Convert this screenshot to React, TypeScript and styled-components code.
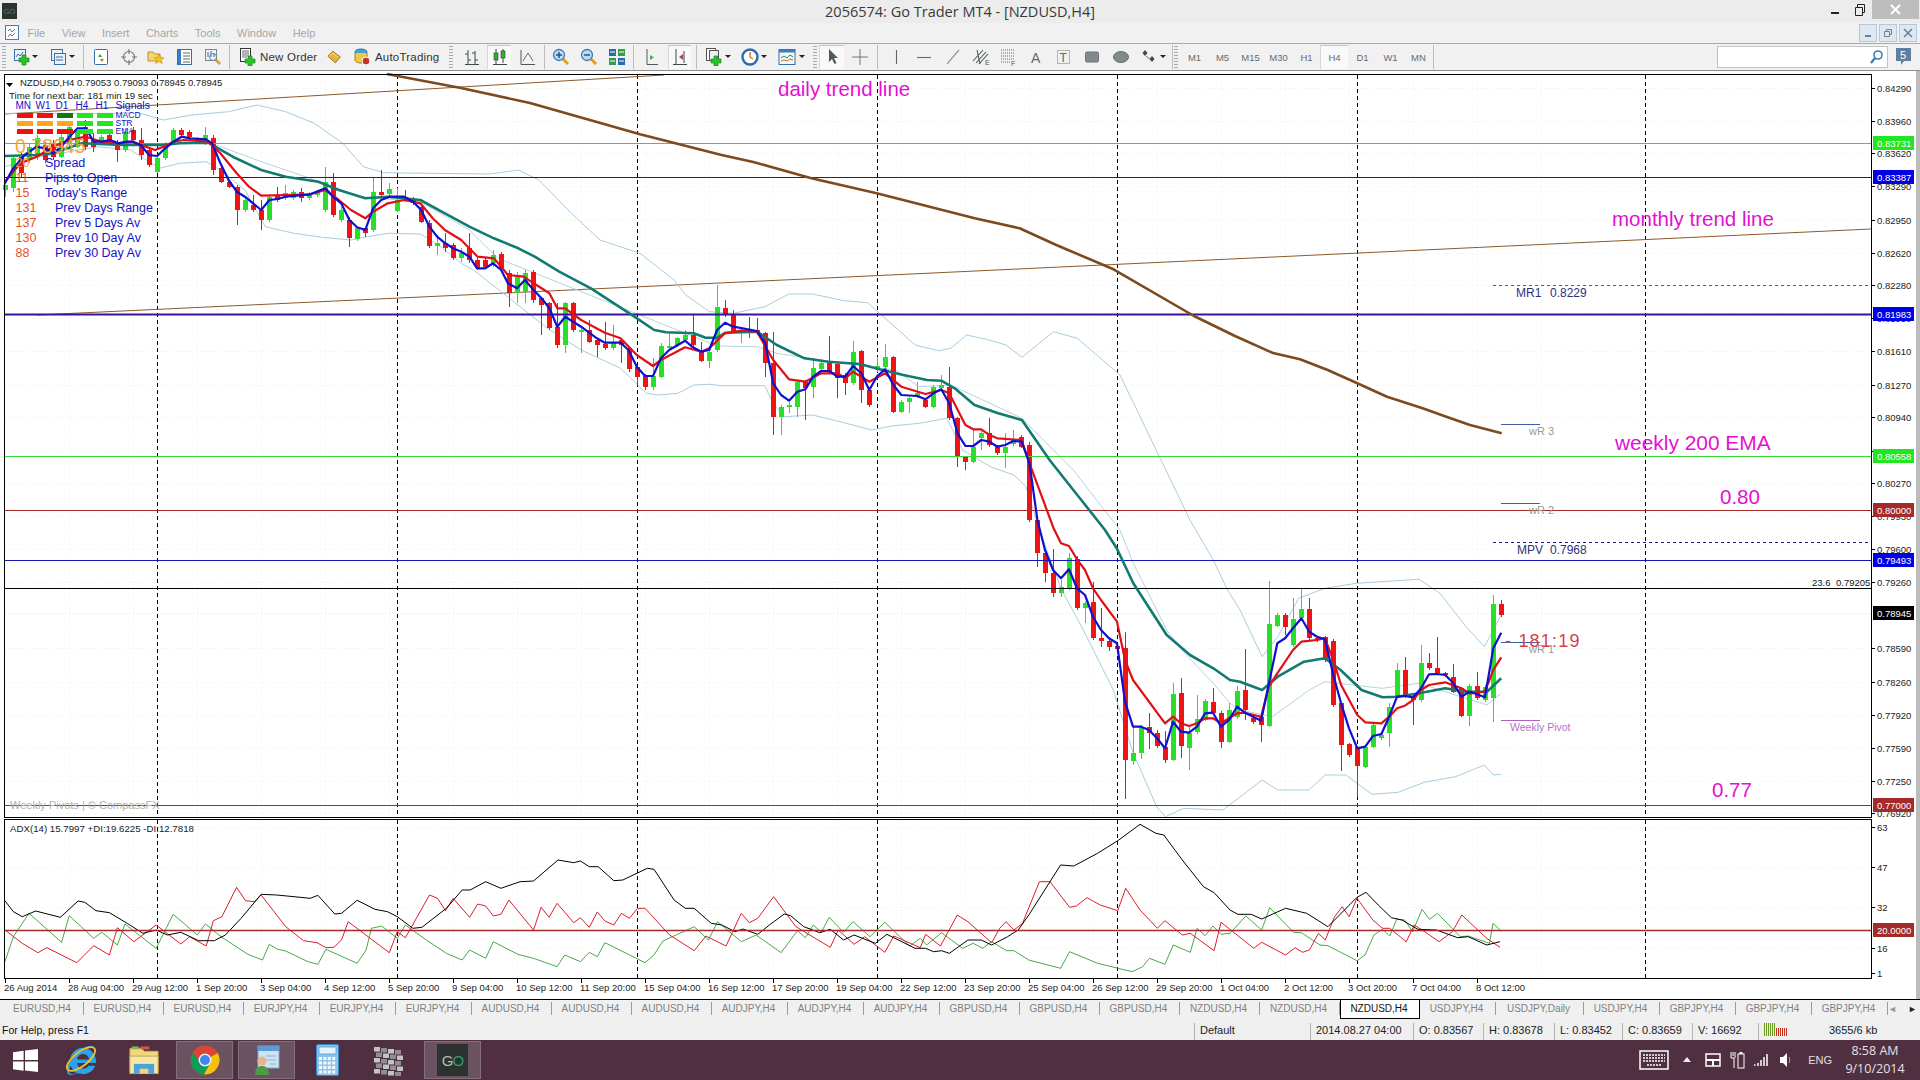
import React from "react";
import styled, { createGlobalStyle } from "styled-components";
import { FaInternetExplorer } from "react-icons/fa";

type Pt = [number, number];
type Bar = [string, number, number, number?, number?];

const GlobalStyle = createGlobalStyle`
  html, body {
    margin: 0;
    padding: 0;
    width: 1920px;
    height: 1080px;
    overflow: hidden;
    background: #f0f0f0;
    font-family: "Liberation Sans", Arial, sans-serif;
  }
`;

/* ---------- chart data, read off the chart in pixels ---------- */

const scaled =
  (x0: number, xs: number, y0: number) =>
  (flat: number[]): Pt[] => {
    const out: Pt[] = [];
    for (let i = 0; i < flat.length; i += 2) {
      out.push([x0 + flat[i] / xs, y0 + flat[i + 1] / 3]);
    }
    return out;
  };
const za = scaled(0, 2.45, 0);
const zb = scaled(500, 2.529, 270);
const zc = scaled(1000, 3, 520);
const zd = scaled(1100, 1.912, 560);
const zs = scaled(640, 2.45, 0);
const zr = scaled(1300, 2.529, 270);
const adxA = scaled(0, 2.24, 780);
const adxB = scaled(690, 1.889, 810);

const join = (...parts: Pt[][]): string => {
  let last = -1;
  const out: string[] = [];
  parts.flat().forEach(([x, y]) => {
    if (x > last) {
      out.push(`${x.toFixed(1)},${y.toFixed(1)}`);
      last = x;
    }
  });
  return out.join(" ");
};

const blueLine = join(
  za([12,550,30,510,60,465,90,440,110,445,130,460,150,440,170,410,190,385,210,385,230,425,250,425,270,420,290,430,310,425,325,425,345,435,365,465,385,468,405,445,425,425,445,410,465,415,505,418,520,430,540,490,560,540,580,575,600,590,640,630,660,600,680,597,700,590,760,583,797,565,816,590,836,610,856,660,875,682,895,690,914,625,934,600,954,590,990,590,1012,605,1032,630,1052,680,1071,710,1091,730,1110,745,1130,755,1150,770,1169,805,1189,805,1208,790,1228,810]),
  zb([20,40,43,55,63,30,85,60,105,85,125,115,145,170,165,140,205,170,245,205,265,218,305,218,325,240,346,290,367,318,387,318,407,265,428,240,468,212,488,232,509,245,529,240,549,180,569,158,590,170,650,183,671,220,691,340,711,375,731,392,752,365,772,358,792,320,812,303,833,303,853,320,873,320,893,288,914,310,934,360,954,318,974,298,995,345,1015,375,1055,378,1076,388,1096,370,1116,358,1136,400,1157,490,1177,528,1197,528,1217,510,1238,515,1258,530,1278,525,1298,513,1319,515,1339,580,1359,750]),
  zc([135,90,159,150,183,175,207,148,231,205,255,225,279,290,303,330,327,355,351,370,375,545,399,620,423,620,447,630,471,655,495,685,519,605,543,635,567,638,591,620,615,580,639,578,663,620,687,600]),
  zd([262,440,277,458,293,470,308,482,323,370,339,250,354,235,369,205,385,175,400,215,415,230,430,238,446,345,461,430,476,505,492,565,507,560,522,528,538,522,553,470,568,410,583,408,599,412,614,385,629,343,645,342,660,345,675,368,691,410,706,395,721,403,736,412,752,265,767,218])
);

const redLine = join(
  za([12,545,50,490,90,470,130,440,170,420,210,410,250,425,290,430,325,425,345,435,380,450,400,440,425,425,450,420,510,425,540,460,580,520,610,560,640,587,700,585,760,583,797,570,830,600,860,630,895,655,914,635,950,610,990,600,1030,610,1060,655,1090,690,1130,720,1170,770,1210,775,1228,800]),
  zb([20,15,60,20,85,40,125,70,145,115,165,115,205,150,265,188,305,205,346,255,387,288,407,270,468,232,509,245,529,235,569,190,610,182,650,185,691,270,731,328,772,335,812,310,853,310,873,325,893,305,934,335,974,310,1015,350,1076,372,1116,360,1136,370,1177,465,1197,478,1217,478,1238,495,1258,505,1319,510,1339,580,1400,775]),
  zc([159,20,183,70,207,78,231,118,255,150,279,205,303,240,351,305,375,420,399,480,495,610,519,590,543,610,567,618,591,610,615,595,639,595,663,610,711,580]),
  zd([277,458,308,470,323,380,339,340,369,270,385,245,415,240,430,235,446,300,461,375,492,465,507,487,538,490,553,470,568,445,583,437,599,420,614,390,629,375,660,367,691,385,706,400,736,395,752,330,767,292])
);

const tealLine = join(
  za([12,468,90,465,130,460,200,430,300,435,400,435,440,430,510,428,570,470,640,510,700,530,780,545,830,570,895,595,950,590,1030,600,1090,640,1150,680,1210,715,1270,745,1310,770,1370,815]),
  zb([230,55,340,140,390,180,420,187,490,190,520,203,550,203,570,188,650,185,700,225,770,265,830,275,910,282,960,298,1020,315,1080,330,1116,332,1150,355,1200,405,1260,430,1320,450,1390,570,1430,630,1470,690,1530,780]),
  zc([350,85,400,190,500,345,570,405,640,445,690,480,720,485]),
  zd([262,365,310,390,340,350,390,305,430,295,460,330,500,390,540,412,570,410,610,400,660,385,700,395,740,395,767,355])
);

const ema200 = join(
  zs([-620,222]),
  [[461,88],[530,103]],
  zs([0,403,200,465,280,487,420,535,580,580,700,617,820,655,930,685,1020,735,1160,808]),
  [[1194,316],[1235,336],[1273,353]],
  zr([0,268,70,300,145,340,220,380,310,415,370,440,430,465,510,490])
);

const upperBand = join(
  za([12,340,280,340,340,338,400,360,470,345,560,335,630,315,700,335,770,370,840,430,890,500,940,518,1050,520,1200,522,1270,510,1320,540,1400,640,1470,720,1568,760]),
  zb([440,30,470,75,530,125,590,130,670,110,730,72,790,72,870,92,930,98,960,130,1050,225,1110,242,1140,235,1180,195,1230,208,1280,225,1320,262,1400,185,1460,205,1568,315]),
  zc([570,0,640,120,680,205,720,270]),
  zd([260,150,310,290,340,230,380,115,430,85,490,70,610,58,650,100,700,200,735,260,752,210,767,165])
);

const midBand = join(
  za([530,435,640,485,760,535,880,590,1030,605,1150,690,1220,775]),
  zb([550,228,650,230,700,250,800,268,900,285,1000,300,1060,350,1140,345,1320,445,1450,600,1568,780]),
  zc([320,0,350,40,400,130,500,330,550,395,640,490,690,550,720,570]),
  zd([330,470,400,390,430,365,500,378,540,385,610,370,640,385,740,435,767,400])
);

const lowerBand = join(
  za([12,500,100,470,240,440,320,450,390,505,440,490,505,485,540,510,600,570,650,680,720,700,790,712,860,720,900,710,950,700,1030,702,1080,740,1130,790,1160,810]),
  zb([40,100,120,175,205,240,305,295,370,370,400,375,450,370,490,345,530,343,560,347,670,347,690,400,720,440,790,435,870,458,940,480,990,468,1060,460,1130,445,1170,540,1240,590,1300,615,1330,650,1365,780]),
  zc([185,210,250,330,340,510,400,700,470,860]),
  zd([125,770,160,745,235,750,310,660,340,690,400,690,430,645,470,645,520,703,570,697,620,667,680,650,735,615,752,645,767,643])
);

const adxBlack = join(
  adxA([11,362,30,395,50,410,80,393,135,412,175,363,190,367,215,392,245,398,285,430,320,460,350,450,375,465,405,457,445,482,480,482,505,465,540,415,585,343,620,345,695,355,712,346,750,402,765,400,800,361,840,388,868,395,890,410,925,445,945,442,1000,385,1035,330,1053,330,1088,305,1122,325,1165,305,1195,303,1250,240,1285,248,1300,243,1320,260,1340,260,1375,302,1395,300,1450,265,1465,268,1510,360,1535,385,1555,385]),
  adxB([40,340,60,345,85,365,100,357,128,373,150,345,178,312,190,317,215,350,245,368,265,358,290,390,310,375,350,400,372,373,425,415,445,415,460,425,475,422,490,430,525,390,550,390,570,405,600,380,620,360,640,315,700,165,725,168,770,130,810,90,850,43,880,70,895,75,930,150,970,230,990,248,1020,300,1035,313,1060,313,1080,327,1125,295,1165,310,1205,350,1260,262,1277,247,1300,285,1325,323,1345,330,1375,358,1410,360,1450,383,1470,380,1505,405,1530,395])
);

const adxRed = join(
  adxA([11,450,50,490,85,518,105,503,172,548,210,497,245,525,263,443,300,485,350,435,405,492,425,470,462,498,478,422,497,410,530,322,550,362,570,365,585,345,640,440,680,482,710,488,730,503,748,502,765,480,780,425,872,518,890,455,908,473,962,345,980,355,998,392,1015,355,1052,412,1070,372,1088,378,1105,408,1122,403,1140,360,1195,450,1212,382,1230,412,1248,370,1285,428,1300,413,1320,442,1338,396,1355,423,1375,435,1392,400,1410,415,1428,385,1445,385,1500,465,1555,512]),
  adxB([30,378,68,408,97,310,112,338,128,325,158,260,200,350,265,412,280,360,310,403,330,380,368,427,385,378,435,413,445,373,473,408,505,315,525,335,570,398,585,355,597,335,612,360,628,340,660,215,680,215,717,292,730,288,750,263,775,285,808,302,823,235,850,300,883,355,897,332,930,375,945,370,990,422,1003,337,1065,415,1080,397,1125,435,1143,413,1157,427,1170,420,1187,370,1200,390,1217,322,1232,290,1245,320,1260,265,1290,330,1308,355,1322,355,1353,395,1368,345,1385,362,1415,395,1440,365,1458,315,1505,385,1530,412])
);

const adxGreen = join(
  adxA([11,545,30,470,65,400,138,487,155,407,210,475,228,457,263,495,280,432,350,505,388,403,442,465,460,432,495,470,555,523,588,540,603,493,622,508,640,513,690,545,712,553,730,508,800,550,820,510,832,445,855,438,890,475,908,435,955,480,1000,520,1035,540,1052,510,1088,535,1105,485,1160,523,1195,535,1248,560,1265,525,1300,545,1320,517,1338,530,1355,488,1445,548,1465,525,1485,483,1555,440]),
  adxB([35,390,52,335,97,395,125,375,172,428,203,362,218,383,233,345,248,367,263,322,290,367,308,335,340,380,368,337,415,408,435,385,447,405,475,368,515,415,535,400,553,415,570,395,598,422,612,422,640,450,700,475,717,425,770,460,835,485,855,470,868,445,897,463,913,405,945,427,958,355,973,377,988,348,1003,373,1020,370,1050,318,1080,360,1095,293,1140,367,1155,368,1190,405,1205,407,1260,452,1275,435,1292,375,1308,358,1322,378,1335,328,1350,330,1365,365,1383,298,1397,328,1412,310,1455,380,1470,378,1510,400,1517,340,1530,360])
);

// [colour, body top, body bottom, wick top, wick bottom]
const barsA: Bar[] = [
  ["g",555,570,540,590],["g",475,565,470,575],["r",470,520,460,530],["g",440,480,430,490],["g",415,470,405,480],["r",435,480,425,490],["r",430,470,420,480],["g",410,470,400,475],["g",380,430,370,440],["g",390,440,380,445],
  ["r",380,440,360,450],["r",420,440,400,455],["g",410,430,405,435],["r",405,430,395,435],["r",430,450,420,485],["g",395,450,385,455],["r",390,420,380,425],["r",420,465,385,480],["r",450,495,440,500],["g",475,515,465,520],
  ["g",430,475,425,480],["g",390,430,385,435],["r",390,405,385,415],["r",395,410,390,420],["g",415,425,410,430],["g",405,430,380,435],["r",415,510,405,525],["r",505,545,500,550],["r",545,560,540,565],["r",560,630,555,675],
  ["g",600,630,590,635],["r",615,630,585,635],["r",630,660,600,690],["g",590,660,585,665],["r",585,600,560,605],["g",580,595,555,600],["g",575,595,570,600],["r",575,595,565,605],["g",585,595,575,600],["g",575,585,570,590],
  ["g",545,630,500,635],["r",545,645,520,650],["g",630,660,620,665],["r",660,715,650,740],["g",685,718,680,722],["r",685,700,680,710],["g",575,690,535,695],["r",575,585,510,590],["g",568,582,548,590],["g",600,632,565,636],
  ["r",592,602,570,606],["r",598,608,590,615],["r",620,665,610,670],["r",670,738,660,745],["g",730,738,705,765],["r",730,745,700,755],["r",735,775,730,780],["g",760,775,745,785],["r",745,780,700,790],["r",780,805,775,810],
  ["r",780,800,770,806],["g",765,790,750,800],["r",762,805,755,810],
];
const barsB: Bar[] = [
  ["r",10,70,0,110],["g",15,70,5,100],["g",10,65,0,100],["r",5,90,0,100],["r",85,105,80,195],["r",100,175,95,180],["r",170,225,100,235],["g",100,225,95,250],["r",100,180,95,185],["g",180,185,175,248],
  ["r",180,215,150,220],["r",210,225,205,260],["r",222,235,155,240],["g",215,235,165,240],["r",210,225,205,280],["r",235,298,230,305],["r",290,320,285,345],["r",318,350,312,360],["g",318,352,265,360],["g",228,320,220,325],
  ["g",228,235,190,240],["g",205,225,200,232],["g",195,210,180,215],["r",195,225,135,240],["r",245,272,215,276],["g",245,272,240,295],["g",110,240,45,245],["r",115,135,90,140],["r",135,185,120,190],["g",180,190,175,220],
  ["r",178,184,140,205],["r",180,190,145,195],["r",190,278,185,320],["r",278,442,185,495],["g",410,442,405,495],["g",405,410,395,430],["g",335,410,330,440],["r",335,355,330,450],["g",295,352,265,385],["g",280,298,275,305],
  ["r",280,305,198,310],["r",282,325,278,385],["r",315,340,310,375],["g",245,340,212,345],["r",243,360,240,400],["r",360,405,355,410],["g",288,300,260,305],["g",262,290,222,295],["r",262,425,258,430],["g",395,425,390,430],
  ["g",385,395,380,430],["g",370,380,335,385],["r",390,410,385,415],["g",350,410,345,415],["g",345,355,315,360],["r",350,445,290,450],["r",445,558,440,590],["r",562,575,558,600],["g",532,575,475,580],["g",488,505,482,540],
  ["r",488,525,445,530],["r",530,550,525,555],["g",530,548,490,595],["g",510,522,480,528],["r",500,530,495,535],["r",525,750,515,755],
];
const barsC: Bar[] = [
  ["r",0,100,0,140],["r",100,160,95,185],["r",160,220,88,232],["g",200,220,180,230],["g",115,205,100,210],["r",118,265,108,270],["g",248,265,244,310],["r",245,355,185,360],["r",355,362,265,382],["r",362,380,358,392],
  ["r",378,386,374,390],["r",385,720,335,838],["g",698,722,620,735],["g",620,698,615,718],["r",620,640,578,688],["r",638,678,630,685],["r",680,720,632,728],["g",522,720,490,724],["r",520,678,475,715],["g",640,684,620,750],
  ["g",598,635,525,642],["g",542,600,538,604],["r",545,580,505,584],["r",578,665,574,685],["g",570,665,550,669],
];
const barsD: Bar[] = [
  ["g",392,470,378,476],["r",390,450,268,480],["r",475,487,470,492],["r",472,495,468,545],["g",192,497,62,500],["g",165,198,160,202],["r",165,200,160,225],["g",178,255,115,260],["g",148,175,85,180],["r",148,235,115,240],
  ["r",235,240,230,245],["r",232,300,228,305],["r",242,435,238,440],["r",430,555,425,632],["r",553,585,548,590],["r",562,618,558,710],["g",560,620,555,625],["g",495,560,490,565],["g",525,535,515,540],["g",440,520,430,560],
  ["g",330,410,310,415],["r",330,410,290,415],["r",410,420,405,495],["g",310,420,255,425],["r",310,325,280,330],["r",325,340,232,345],["r",340,346,335,350],["r",350,395,312,400],["r",385,468,380,472],["g",378,468,372,498],
  ["r",378,415,335,420],["g",380,420,375,425],["g",132,415,105,487],["r",132,165,120,170],
];

const candles = [
  ...barsA.map((b) => ({ b, y0: 0 })),
  ...barsB.map((b) => ({ b, y0: 270 })),
  ...barsC.map((b) => ({ b, y0: 520 })),
  ...barsD.map((b) => ({ b, y0: 560 })),
];

const verticals = [157, 397, 637, 877, 1117, 1357, 1645];

const priceLabels: [number, string][] = [
  [88,"0.84290"],[121,"0.83960"],[153,"0.83620"],[186,"0.83290"],[220,"0.82950"],[253,"0.82620"],[285,"0.82280"],[318,"0.81950"],
  [351,"0.81610"],[385,"0.81270"],[417,"0.80940"],[451,"0.80600"],[483,"0.80270"],[516,"0.79930"],[549,"0.79600"],[582,"0.79260"],
  [648,"0.78590"],[682,"0.78260"],[715,"0.77920"],[748,"0.77590"],[781,"0.77250"],[813,"0.76920"],
];

const levels: { y: number; color: string; tag: string; text: string; w?: number }[] = [
  { y: 143, color: "#2fdc2f", tag: "#22e622", text: "0.83731" },
  { y: 177, color: "#1616b0", tag: "#0000e6", text: "0.83387" },
  { y: 314, color: "#3a10a0", tag: "#0000e6", text: "0.81983", w: 2 },
  { y: 456, color: "#2fdc2f", tag: "#22e622", text: "0.80558" },
  { y: 510, color: "#a52a2a", tag: "#a52a2a", text: "0.80000" },
  { y: 560, color: "#1616b0", tag: "#0000e6", text: "0.79493" },
  { y: 805, color: "#a52a2a", tag: "#a52a2a", text: "0.77000" },
];

const signalRows = [
  ["#ee1111", "#ee1111", "#0b7a12", "#22e622", "#22e622"],
  ["#ffa51e", "#ffa51e", "#ffa51e", "#22e622", "#22e622"],
  ["#ee1111", "#ee1111", "#ee1111", "#22e622", "#22e622"],
];

const infoRows: [number, string, string, number][] = [
  [167, "20", "Spread", 45],
  [182, "11", "Pips to Open", 45],
  [197, "15", "Today's Range", 45],
  [212, "131", "Prev Days Range", 55],
  [227, "137", "Prev 5 Days Av", 55],
  [242, "130", "Prev 10 Day Av", 55],
  [257, "88", "Prev 30 Day Av", 55],
];

const timeLabels = [
  "26 Aug 2014","28 Aug 04:00","29 Aug 12:00","1 Sep 20:00","3 Sep 04:00","4 Sep 12:00","5 Sep 20:00","9 Sep 04:00","10 Sep 12:00","11 Sep 20:00","15 Sep 04:00","16 Sep 12:00",
  "17 Sep 20:00","19 Sep 04:00","22 Sep 12:00","23 Sep 20:00","25 Sep 04:00","26 Sep 12:00","29 Sep 20:00","1 Oct 04:00","2 Oct 12:00","3 Oct 20:00","7 Oct 04:00","8 Oct 12:00",
];

const tabs: [string, number][] = [
  ["EURUSD,H4",81],["EURUSD,H4",80],["EURUSD,H4",80],["EURJPY,H4",76],["EURJPY,H4",76],["EURJPY,H4",76],
  ["AUDUSD,H4",80],["AUDUSD,H4",80],["AUDUSD,H4",80],["AUDJPY,H4",76],["AUDJPY,H4",76],["AUDJPY,H4",76],
  ["GBPUSD,H4",80],["GBPUSD,H4",80],["GBPUSD,H4",80],["NZDUSD,H4",80],["NZDUSD,H4",80],["NZDUSD,H4",80],
  ["USDJPY,H4",76],["USDJPY,Daily",88],["USDJPY,H4",76],["GBPJPY,H4",76],["GBPJPY,H4",76],["GBPJPY,H4",76],
];

const timeframes = ["M1", "M5", "M15", "M30", "H1", "H4", "D1", "W1", "MN"];

const statusCells: [string, number][] = [
  ["2014.08.27 04:00", 103],
  ["O: 0.83567", 70],
  ["H: 0.83678", 71],
  ["L: 0.83452", 68],
  ["C: 0.83659", 70],
  ["V: 16692", 66],
];

/* ---------- window chrome ---------- */

const Page = styled.div`
  width: 1920px;
  height: 1080px;
  display: flex;
  flex-direction: column;
  background: #f0f0f0;
  overflow: hidden;
`;
const TitleBar = styled.div`
  height: 23px;
  background: #ececec;
  position: relative;
  display: flex;
  align-items: center;
  justify-content: center;
  font-family: "Open Sans", sans-serif;
  font-size: 14.5px;
  color: #3a3a3a;
`;
const AppBadge = styled.div`
  position: absolute;
  left: 2px;
  top: 3px;
  width: 15px;
  height: 16px;
  background: #2b322f;
  color: #5d7a6c;
  font-size: 8px;
  line-height: 16px;
  text-align: center;
`;
const WinButtons = styled.div`
  position: absolute;
  right: 1px;
  top: 0;
  display: flex;
  align-items: center;
  height: 19px;
`;
const WinButton = styled.div<{ $close?: boolean }>`
  width: ${(p) => (p.$close ? 47 : 25)}px;
  height: 19px;
  display: flex;
  align-items: center;
  justify-content: center;
  background: ${(p) => (p.$close ? "#bdbdbd" : "transparent")};
`;
const MenuBar = styled.div`
  height: 20px;
  background: #f1f1f1;
  display: flex;
  align-items: center;
  gap: 16.5px;
  padding-left: 5px;
  font-size: 11px;
  color: #a6a6a6;
  position: relative;
`;
const MenuIcon = styled.div`
  width: 15px;
  height: 16px;
  margin-right: -9px;
`;
const MdiButtons = styled.div`
  margin-left: auto;
  display: flex;
  gap: 2px;
  padding-right: 3px;
`;
const MdiButton = styled.div`
  width: 16px;
  height: 16px;
  background: #dde8f2;
  border: 1px solid #b4c8d8;
  display: flex;
  align-items: center;
  justify-content: center;
`;

const Toolbar = styled.div`
  height: 27px;
  background: #f1f1f1;
  border-top: 1px solid #a9a9a9;
  border-bottom: 1px solid #8f8f8f;
  display: flex;
  align-items: center;
`;
const Tool = styled.div<{ $w: number; $ml?: number; $active?: boolean }>`
  flex: none;
  width: ${(p) => p.$w}px;
  height: 24px;
  margin-left: ${(p) => p.$ml ?? 0}px;
  display: flex;
  align-items: center;
  justify-content: center;
  background: ${(p) => (p.$active ? "#f9f9f9" : "transparent")};
  border-top: 1px solid ${(p) => (p.$active ? "#c4c4c4" : "transparent")};
  border-left: 1px solid ${(p) => (p.$active ? "#d6d6d6" : "transparent")};
  box-sizing: border-box;
  font-size: 9.5px;
  color: #6a6a6a;
`;
const Caret = styled.div<{ $ml?: number }>`
  flex: none;
  width: 8px;
  margin-left: ${(p) => p.$ml ?? 0}px;
  display: flex;
  justify-content: center;
  &::after {
    content: "";
    border-left: 3px solid transparent;
    border-right: 3px solid transparent;
    border-top: 3px solid #222;
  }
`;
const Sep = styled.div<{ $ml?: number }>`
  flex: none;
  width: 1px;
  height: 24px;
  margin-left: ${(p) => p.$ml ?? 0}px;
  background: #bcbcbc;
`;
const Grip = styled.div<{ $w?: number; $ml?: number }>`
  flex: none;
  width: 4px;
  height: 22px;
  margin-left: ${(p) => p.$ml ?? 3}px;
  margin-right: ${(p) => (p.$w ? p.$w - 6 - (p.$ml ?? 3) + 2 : 2)}px;
  background: repeating-linear-gradient(to bottom, #a9a9a9 0 1px, transparent 1px 3px);
`;
const ToolLabel = styled.div<{ $w: number; $ml?: number }>`
  flex: none;
  width: ${(p) => p.$w}px;
  margin-left: ${(p) => p.$ml ?? 0}px;
  font-size: 11.5px;
  letter-spacing: 0.2px;
  color: #333;
  white-space: nowrap;
`;
const SearchBox = styled.div`
  margin-left: auto;
  width: 171px;
  height: 22px;
  box-sizing: border-box;
  background: #fff;
  border: 1px solid #c2c2c2;
  display: flex;
  align-items: center;
  justify-content: flex-end;
  padding-right: 3px;
`;
const ChatBadge = styled.div`
  margin: 0 8px 0 7px;
  width: 17px;
  height: 19px;
  display: flex;
`;

/* ---------- chart ---------- */

const ChartBody = styled.div`
  height: 928px;
  background: #fff;
  border-right: 4px solid #bcbcbc;
  width: 1916px;
  display: flex;
  flex-direction: column;
`;
const PanelSvg = styled.svg`
  display: block;
  flex: none;
  font-family: "Liberation Sans", Arial, sans-serif;
`;
const Txt = styled.text<{ $c?: string; $s?: number }>`
  fill: ${(p) => p.$c ?? "#222"};
  font-size: ${(p) => p.$s ?? 9.5}px;
`;
const TimeAxis = styled.div`
  height: 20px;
  display: flex;
  padding-left: 5px;
`;
const TimeCell = styled.div`
  flex: none;
  width: 64px;
  position: relative;
  font-size: 9.5px;
  line-height: 9px;
  padding-top: 4px;
  box-sizing: border-box;
  color: #222;
  white-space: nowrap;
  text-indent: -1px;
  &::before {
    content: "";
    position: absolute;
    left: 0;
    top: 0;
    width: 1px;
    height: 4px;
    background: #000;
  }
`;

/* ---------- tabs and status ---------- */

const TabBar = styled.div`
  height: 20px;
  box-sizing: border-box;
  background: #f0f0f0;
  border-top: 1px solid #000;
  display: flex;
  align-items: stretch;
  padding-left: 3px;
`;
const Tab = styled.div<{ $w: number; $active?: boolean }>`
  flex: none;
  width: ${(p) => p.$w}px;
  box-sizing: border-box;
  display: flex;
  align-items: center;
  justify-content: center;
  font-size: 10px;
  color: ${(p) => (p.$active ? "#111" : "#808080")};
  background: ${(p) => (p.$active ? "#fff" : "transparent")};
  border-right: ${(p) => (p.$active ? "1px solid #000" : "1px solid #9a9a9a")};
  border-left: ${(p) => (p.$active ? "1px solid #000" : "none")};
  border-bottom: ${(p) => (p.$active ? "1px solid #000" : "none")};
  margin: ${(p) => (p.$active ? "0" : "2px 0 4px")};
  padding: ${(p) => (p.$active ? "0 2px 2px 0" : "0 2px 0 0")};
`;
const TabArrows = styled.div`
  margin-left: auto;
  padding-right: 5px;
  display: flex;
  align-items: center;
  gap: 11px;
  font-size: 9px;
  color: #999;
  margin-bottom: 2px;
`;
const StatusBar = styled.div`
  height: 21px;
  background: #efefef;
  display: flex;
  align-items: center;
  font-size: 11px;
  color: #222;
`;
const StatusHelp = styled.div`
  width: 1194px;
  padding-left: 2px;
  box-sizing: border-box;
  font-size: 10.5px;
  color: #111;
  flex: none;
`;
const StatusCell = styled.div<{ $w: number }>`
  flex: none;
  width: ${(p) => p.$w}px;
  box-sizing: border-box;
  height: 17px;
  margin-top: 4px;
  line-height: 15px;
  padding-left: 5px;
  border-left: 1px solid #b5b5b5;
  white-space: nowrap;
`;
const Memory = styled.div`
  margin-left: 41px;
  white-space: nowrap;
`;

/* ---------- taskbar ---------- */

const Taskbar = styled.div`
  height: 40px;
  background: #4f2f40;
  display: flex;
  align-items: center;
  color: #e8e0e4;
`;
const TaskSlot = styled.div<{ $w: number; $ml?: number; $open?: boolean }>`
  flex: none;
  position: relative;
  width: ${(p) => p.$w}px;
  height: 38px;
  margin-left: ${(p) => p.$ml ?? 0}px;
  box-sizing: border-box;
  display: flex;
  align-items: center;
  justify-content: center;
  background: ${(p) => (p.$open ? "#6b5260" : "transparent")};
  border: 1px solid ${(p) => (p.$open ? "#84707b" : "transparent")};
`;
const IeRing = styled.svg`
  position: absolute;
  left: 0;
  top: 1px;
`;
const GoMark = styled.div`
  width: 31px;
  height: 32px;
  background: #2b322f;
  display: flex;
  align-items: center;
  justify-content: center;
  font-size: 15px;
  letter-spacing: -1px;
  color: #b8bdba;
  & > span {
    color: #2f9c72;
  }
`;
const Tray = styled.div`
  margin-left: auto;
  display: flex;
  align-items: center;
  height: 40px;
`;
const Lang = styled.div`
  font-size: 11px;
  margin-left: 16px;
`;
const Clock = styled.div`
  width: 60px;
  margin-left: 13px;
  margin-right: 15px;
  line-height: 18px;
  text-align: center;
  font-family: "Open Sans", sans-serif;
  font-size: 12.5px;
  white-space: nowrap;
`;

/* ---------- icons ---------- */

const Ico = ({ children, w = 18, h = 18 }: { children: React.ReactNode; w?: number; h?: number }) => (
  <svg width={w} height={h} viewBox={`0 0 ${w} ${h}`}>
    {children}
  </svg>
);
const Plus = ({ x, y }: { x: number; y: number }) => (
  <path d={`M${x + 3} ${y}h4v3h3v4h-3v3h-4v-3h-3v-4h3z`} fill="#27c427" stroke="#137a13" strokeWidth=".6" />
);
const Doc = ({ x = 2, y = 1, w = 12, h = 13 }: { x?: number; y?: number; w?: number; h?: number }) => (
  <rect x={x + 0.5} y={y + 0.5} width={w} height={h} fill="#e8f0f8" stroke="#3a6ea5" />
);
const Lens = ({ sign }: { sign: "+" | "-" }) => (
  <>
    <line x1="10" y1="10" x2="16" y2="16" stroke="#e59a2c" strokeWidth="3" />
    <circle cx="7" cy="7" r="5.5" fill="#bcd9f0" stroke="#3b78b5" strokeWidth="1.3" />
    <path d={sign === "+" ? "M4 7h6M7 4v6" : "M4 7h6"} stroke="#1c4f8a" strokeWidth="1.4" />
  </>
);

const Icons = {
  newChart: (
    <Ico>
      <Doc w={11} h={11} />
      <path d="M4 9l2-3 2 2 3-4" stroke="#3a6ea5" fill="none" />
      <Plus x={7} y={7} />
    </Ico>
  ),
  profiles: (
    <Ico>
      <Doc w={11} h={11} />
      <Doc x={5} y={5} w={11} h={11} />
      <path d="M7 9h7M7 12h7" stroke="#3a6ea5" />
    </Ico>
  ),
  market: (
    <Ico>
      <rect x="2.5" y="1.5" width="13" height="15" rx="1" fill="#fff" stroke="#3a6ea5" />
      <path d="M6 9l2-3 2 3z" fill="#22aa22" />
      <path d="M8 11h4l-2 3z" fill="#e07018" />
    </Ico>
  ),
  nav: (
    <Ico>
      <circle cx="9" cy="9" r="5.5" fill="none" stroke="#777" strokeWidth="1.2" />
      <path d="M9 1v5M9 12v5M1 9h5M12 9h5" stroke="#777" strokeWidth="1.2" />
    </Ico>
  ),
  folderStar: (
    <Ico>
      <path d="M1 4h5l2 2h5v7H1z" fill="#f5d66a" stroke="#b8912e" />
      <path d="M12 6l1.6 3.4 3.4.4-2.6 2.3.8 3.4-3.2-1.9-3.2 1.9.8-3.4L7 9.8l3.4-.4z" fill="#f7c21c" stroke="#b8912e" strokeWidth=".6" />
    </Ico>
  ),
  terminal: (
    <Ico>
      <rect x="1.5" y="1.5" width="14" height="15" fill="#fff" stroke="#3a6ea5" />
      <rect x="2" y="2" width="3" height="14" fill="#3a7fc4" />
      <path d="M7 5h7M7 8h7M7 11h7M7 14h7" stroke="#666" />
    </Ico>
  ),
  tester: (
    <Ico>
      <rect x="1.5" y="1.5" width="11" height="11" fill="#eef2f6" stroke="#6f86a0" />
      <path d="M4 4v5M7 3v6M10 5v4" stroke="#3a6ea5" />
      <circle cx="9" cy="9" r="3.5" fill="none" stroke="#6f86a0" />
      <line x1="12" y1="12" x2="16" y2="16" stroke="#e59a2c" strokeWidth="2.5" />
    </Ico>
  ),
  newOrder: (
    <Ico>
      <rect x="1.5" y="0.5" width="10" height="13" fill="#fff" stroke="#333" />
      <path d="M3 3h7M3 5h7M3 7h7M3 9h5" stroke="#6a6a6a" />
      <Plus x={6} y={8} />
    </Ico>
  ),
  tag: (
    <Ico>
      <path d="M1 8l6-6 9 7-6 7z" fill="#e7b53c" stroke="#8a6a1e" />
      <path d="M3 8l4-4 6 5" stroke="#f7e3a0" fill="none" />
    </Ico>
  ),
  auto: (
    <Ico>
      <ellipse cx="8" cy="4" rx="6" ry="3" fill="#3fa7d6" stroke="#2a6d93" />
      <path d="M2 5v7c0 2 3 3 6 3s6-1 6-3V5" fill="#f0c64a" stroke="#a1821f" />
      <circle cx="13" cy="13" r="4" fill="#c6322a" stroke="#fff" />
    </Ico>
  ),
  bars: (
    <Ico w={16} h={18}>
      <path d="M4 2v14M1 6h3M4 12h3M11 3v13M8 5h3M11 12h3M1 16.5h14" stroke="#3a4a4a" fill="none" />
    </Ico>
  ),
  candle: (
    <Ico w={16} h={18}>
      <path d="M4 1v16M11 1v14M1 16.5h14" stroke="#3a4a4a" fill="none" />
      <rect x="2" y="5" width="4" height="7" fill="#2db52d" stroke="#333" strokeWidth=".6" />
      <rect x="9" y="3" width="4" height="7" fill="#2db52d" stroke="#333" strokeWidth=".6" />
    </Ico>
  ),
  line: (
    <Ico w={16} h={18}>
      <path d="M1 2v14.5h14" stroke="#4a5a5a" fill="none" />
      <path d="M3 13l5-8 5 8" stroke="#8a6a4a" fill="none" />
    </Ico>
  ),
  zoomIn: <Ico><Lens sign="+" /></Ico>,
  zoomOut: <Ico><Lens sign="-" /></Ico>,
  tile: (
    <Ico>
      <rect x="1" y="1" width="7" height="7" fill="#2a6bb0" />
      <rect x="10" y="1" width="7" height="7" fill="#2f9e44" />
      <rect x="1" y="10" width="7" height="7" fill="#2f9e44" />
      <rect x="10" y="10" width="7" height="7" fill="#2a6bb0" />
      <path d="M2 4h5M11 4h5M2 13h5M11 13h5" stroke="#fff" />
    </Ico>
  ),
  scroll: (
    <Ico w={14} h={18}>
      <path d="M2 1v15.5h11" stroke="#4a5a5a" fill="none" />
      <path d="M5 7v5l4-2.500z" fill="#4fb04f" />
    </Ico>
  ),
  shift: (
    <Ico w={16} h={18}>
      <path d="M4 1v15.5M1 16.5h14M12 3v12" stroke="#3a4a4a" fill="none" />
      <path d="M7 9l4-3v6z" fill="#a05050" />
    </Ico>
  ),
  addIndicator: (
    <Ico>
      <rect x="1.5" y="0.5" width="9" height="12" fill="#fff" stroke="#555" />
      <rect x="4.5" y="2.5" width="9" height="10" fill="#eef" stroke="#555" />
      <Plus x={6} y={8} />
    </Ico>
  ),
  clock: (
    <Ico>
      <circle cx="9" cy="9" r="7.5" fill="#fff" stroke="#2a6bb0" strokeWidth="2.4" />
      <path d="M9 4v5l3 2" stroke="#cc7a1a" strokeWidth="1.4" fill="none" />
    </Ico>
  ),
  template: (
    <Ico>
      <rect x="1" y="1.5" width="16" height="15" fill="#f4f8fc" stroke="#3a6ea5" />
      <rect x="1" y="1.5" width="16" height="3" fill="#3a7fc4" />
      <path d="M3 10l3-2 3 2 3-3 3 2" stroke="#2c8a2c" fill="none" />
      <path d="M3 13l3-1 3 1 3-2 3 1" stroke="#c07a2a" fill="none" />
    </Ico>
  ),
  cursor: (
    <Ico>
      <path d="M6 1v13l3-3 2.5 5 2-1-2.500-5h4z" fill="#4d5a5a" />
    </Ico>
  ),
  cross: (
    <Ico>
      <path d="M9 1v16M1 9h16" stroke="#777" />
    </Ico>
  ),
  vline: <Ico><path d="M9.500 2v14" stroke="#666" strokeWidth="1.1" /></Ico>,
  hline: <Ico><path d="M2 9.500h14" stroke="#666" strokeWidth="1.1" /></Ico>,
  trend: <Ico><path d="M3 16L15 2" stroke="#777" strokeWidth="1.1" /></Ico>,
  channel: (
    <Ico>
      <path d="M1 13L11 2M4 15L14 4M7 16L16 6M5 2l3 14" stroke="#4d5a5a" strokeWidth="1.1" fill="none" />
      <text x="13" y="17" fontSize="7" fill="#555" fontFamily="Liberation Sans">E</text>
    </Ico>
  ),
  fibo: (
    <Ico>
      <path d="M2 2h13M2 5h13M2 8h13M2 11h13M2 14h9" stroke="#666" strokeDasharray="1 1" />
      <text x="12" y="18" fontSize="7" fill="#555" fontFamily="Liberation Sans">F</text>
    </Ico>
  ),
  textA: (
    <Ico>
      <text x="4" y="15" fontSize="14" fill="#5a6a6a" fontFamily="Liberation Sans">A</text>
    </Ico>
  ),
  textT: (
    <Ico>
      <rect x="2.500" y="2.500" width="12" height="13" fill="none" stroke="#777" strokeDasharray="1 1" />
      <text x="4.500" y="14" fontSize="12" fill="#5a6a6a" fontFamily="Liberation Sans">T</text>
    </Ico>
  ),
  rect: <Ico><rect x="2.500" y="4" width="13" height="10" rx="1.500" fill="#808a8a" stroke="#6a7474" /></Ico>,
  ellipse: <Ico><ellipse cx="9" cy="9" rx="7.500" ry="5.500" fill="#808a8a" stroke="#6a7474" /></Ico>,
  arrows: (
    <Ico>
      <path d="M5 2l2.500 3L5 8 2.500 5z" fill="#3a4a4a" />
      <path d="M12 8l2.500 3-2.500 3-2.500-3z" fill="#3a4a4a" />
      <path d="M6 8l5 4" stroke="#6a7a7a" />
    </Ico>
  ),
};

const WindowsLogo = () => (
  <svg width="27" height="25" viewBox="0 0 27 25">
    <path d="M0 3.500L11.500 2v10H0zM13 1.800L27 0v12H13zM0 13.500h11.500v10L0 22zM13 13.500h14V25l-14-1.800z" fill="#fff" />
  </svg>
);
const ChromeLogo = () => (
  <svg width="30" height="30" viewBox="-15 -15 30 30">
    <circle r="14.500" fill="#db4437" />
    <path d="M-12.600 -7.200A14.500 14.500 0 0 0 -1 14.400L6 2.500 0 6A6 6 0 0 1-6 0z" fill="#0f9d58" />
    <path d="M12.700 -7A14.500 14.500 0 0 1 -1 14.400L5.300 2.800A6 6 0 0 0 5.300 -2.800z" fill="#f4c20d" />
    <circle r="6.500" fill="#f2f2f2" />
    <circle r="5" fill="#4285f4" />
  </svg>
);
const FolderIcon = () => (
  <svg width="33" height="32" viewBox="0 0 33 32">
    <path d="M2 4h12l3 3h14v22H2z" fill="#f3d67c" stroke="#c8a750" />
    <rect x="4" y="2" width="7" height="3" fill="#7db756" />
    <rect x="13" y="2" width="9" height="3" fill="#d8593a" />
    <rect x="2" y="12" width="29" height="18" fill="#f8e7a8" stroke="#c8a750" />
    <rect x="6" y="20" width="21" height="10" fill="#4aa3dc" />
    <rect x="12" y="25" width="9" height="5" fill="#f3d67c" />
  </svg>
);
const PeopleIcon = () => (
  <svg width="28" height="32" viewBox="0 0 28 32">
    <rect x="5" y="2" width="21" height="22" fill="#cfe2f3" stroke="#7fa6c8" />
    <rect x="5" y="2" width="21" height="5" fill="#5d9bd3" />
    <path d="M13 12h10M13 16h10M17 20h6" stroke="#8fb4d4" />
    <circle cx="9" cy="17" r="4.500" fill="#e8b48a" />
    <path d="M2 31c0-7 3-9 7-9s7 2 7 9z" fill="#4f9a45" />
  </svg>
);
const CalcIcon = () => (
  <svg width="23" height="32" viewBox="0 0 23 32">
    <rect x="0.500" y="0.500" width="22" height="31" rx="1.500" fill="#8fc3ea" stroke="#3a86c0" />
    <rect x="3" y="3" width="17" height="7" fill="#e6f3fb" stroke="#3a86c0" strokeWidth=".6" />
    {[0, 1, 2, 3].map((r) =>
      [0, 1, 2, 3].map((c) => <rect key={`${r}-${c}`} x={3 + c * 4.4} y={13 + r * 4.500} width="3" height="3" fill="#f4f9fd" />)
    )}
  </svg>
);
const WallIcon = () => (
  <svg width="30" height="31" viewBox="0 0 30 31">
    {[0, 1, 2, 3, 4].map((r) =>
      [0, 1, 2, 3].map((c) => (
        <rect key={`${r}-${c}`} x={1 + c * 7 + (r % 2) * 2} y={2 + r * 5.500 + c} width="6" height="4.500" fill={(r + c) % 2 ? "#8f8f8f" : "#c4c4c4"} />
      ))
    )}
  </svg>
);

/* ---------- chart panels ---------- */

const ChartLine = ({ pts, color, w = 1 }: { pts: string; color: string; w?: number }) => (
  <polyline points={pts} fill="none" stroke={color} strokeWidth={w} strokeLinejoin="round" />
);

const GridLines = ({ rows, top, bottom }: { rows: number[]; top: number; bottom: number }) => (
  <g stroke="#f1f1e4" strokeDasharray="1 2">
    {rows.map((y) => (
      <line key={y} x1="5" x2="1871" y1={y + 0.5} y2={y + 0.5} />
    ))}
    {timeLabels.map((_, i) => (
      <line key={i} x1={69.5 + i * 64} x2={69.5 + i * 64} y1={top} y2={bottom} />
    ))}
  </g>
);

const DashedVerticals = ({ top, bottom }: { top: number; bottom: number }) => (
  <g stroke="#000" strokeDasharray="4 3">
    {verticals.map((x) => (
      <line key={x} x1={x + 0.5} x2={x + 0.5} y1={top} y2={bottom} />
    ))}
  </g>
);

const PriceTag = ({ y, fill, text }: { y: number; fill: string; text: string }) => (
  <>
    <rect x="1873" y={y - 7} width="41" height="14" fill={fill} />
    <Txt x="1877" y={y + 3.5} $c="#fff">
      {text}
    </Txt>
  </>
);

const MainChart = () => (
  <PanelSvg width="1916" height="748" viewBox="0 71 1916 748">
    <GridLines rows={priceLabels.map((l) => l[0])} top={74} bottom={817} />
    <line x1="5" x2="1871" y1="613.500" y2="613.500" stroke="#f6f2d0" strokeDasharray="2 2" />
    <DashedVerticals top={75} bottom={817} />

    <ChartLine pts="5,114 664,75" color="#8b5a2b" />
    <ChartLine pts="37,315 1871,229" color="#8b5a2b" />

    <ChartLine pts={upperBand} color="#a9cddd" />
    <ChartLine pts={midBand} color="#b4d4e0" />
    <ChartLine pts={lowerBand} color="#a9cddd" />

    {candles.map(({ b, y0 }, i) => {
      const [c, t, bt, wt, wb] = b;
      const x = 5 + i * 8;
      const fill = c === "g" ? "#28e028" : "#ee1414";
      const top = y0 + (wt ?? t) / 3;
      const bot = y0 + (wb ?? bt) / 3;
      return (
        <g key={i} shapeRendering="crispEdges">
          <line x1={x + 0.5} x2={x + 0.5} y1={top} y2={bot} stroke={fill} />
          <rect x={x - 2} y={y0 + t / 3} width="5" height={Math.max((bt - t) / 3, 1)} fill={fill} />
        </g>
      );
    })}

    {levels.map((l) => (
      <line key={l.y} x1="5" x2="1871" y1={l.y + 0.5} y2={l.y + 0.5} stroke={l.color} strokeWidth={l.w ?? 1} />
    ))}
    <line x1="5" x2="1871" y1="588.500" y2="588.500" stroke="#000" />
    <line x1="1493" x2="1871" y1="285.500" y2="285.500" stroke="#e02030" strokeDasharray="3 3" />
    <line x1="1493" x2="1871" y1="542.500" y2="542.500" stroke="#15157f" strokeDasharray="3 3" />

    <ChartLine pts={ema200} color="#7c4a1e" w={2.600} />
    <ChartLine pts={tealLine} color="#127a70" w={2.600} />
    <ChartLine pts={redLine} color="#e01018" w={2.200} />
    <ChartLine pts={blueLine} color="#1010d0" w={2.200} />

    <line x1="1501" x2="1540" y1="424.500" y2="424.500" stroke="#4060a0" />
    <line x1="1501" x2="1540" y1="503.500" y2="503.500" stroke="#4060a0" />
    <line x1="1501" x2="1540" y1="642.500" y2="642.500" stroke="#4060a0" />
    <line x1="1501" x2="1540" y1="720.500" y2="720.500" stroke="#b060c0" />
    <Txt x="1529" y="435" $c="#999" $s={11}>wR 3</Txt>
    <Txt x="1529" y="514" $c="#999" $s={11}>wR 2</Txt>
    <Txt x="1529" y="653" $c="#999" $s={11}>wR 1</Txt>
    <Txt x="1510" y="731" $c="#b574cc" $s={10.500}>Weekly Pivot</Txt>
    <Txt x="1505" y="647" $c="#d84048" $s={18} style={{ letterSpacing: "1.2px" }}>- 181:19</Txt>

    <Txt x="1516" y="297" $c="#30307a" $s={12}>MR1</Txt>
    <Txt x="1550" y="297" $c="#30307a" $s={12}>0.8229</Txt>
    <Txt x="1517" y="554" $c="#30307a" $s={12}>MPV</Txt>
    <Txt x="1550" y="554" $c="#30307a" $s={12}>0.7968</Txt>
    <Txt x="1812" y="586" $c="#111" $s={9.500}>23.6</Txt>
    <Txt x="1836" y="586" $c="#111" $s={9.500}>0.79205</Txt>

    <Txt x="778" y="96" $c="#e40fd2" $s={20.500}>daily trend line</Txt>
    <Txt x="1612" y="226" $c="#e40fd2" $s={20.500}>monthly trend line</Txt>
    <Txt x="1615" y="450" $c="#e40fd2" $s={20.900}>weekly 200 EMA</Txt>
    <Txt x="1720" y="504" $c="#e40fd2" $s={20.500}>0.80</Txt>
    <Txt x="1712" y="797" $c="#e40fd2" $s={20.500}>0.77</Txt>

    <path d="M6 83h7l-3.500 4z" fill="#000" />
    <Txt x="20" y="86" $s={9.500}>NZDUSD,H4  0.79053 0.79093 0.78945 0.78945</Txt>
    <Txt x="9" y="99" $s={9.700}>Time for next bar: 181 min 19 sec</Txt>
    {["MN", "W1", "D1", "H4", "H1"].map((t, i) => (
      <Txt key={t} x={15.500 + i * 20} y="108.500" $c="#1212c8" $s={10}>{t}</Txt>
    ))}
    <Txt x="115.500" y="108.500" $c="#1212c8" $s={10.500}>Signals</Txt>
    {signalRows.map((row, r) =>
      row.map((fill, c) => <rect key={`${r}-${c}`} x={17 + c * 20} y={113 + r * 8} width="16" height="5" fill={fill} />)
    )}
    {["MACD", "STR", "EMA"].map((t, i) => (
      <Txt key={t} x="115.500" y={118 + i * 8} $c="#1212c8" $s={8.500}>{t}</Txt>
    ))}
    <Txt x="15" y="153" $c="#f2a530" $s={19.500} opacity={0.95}>0.78945</Txt>
    {infoRows.map(([y, n, label, x], i) => (
      <React.Fragment key={label}>
        <Txt x="15.500" y={y} $c={i === 0 ? "#f0a030" : "#e8501e"} $s={12.500}>{n}</Txt>
        <Txt x={x} y={y} $c="#1414c4" $s={12.500}>{label}</Txt>
      </React.Fragment>
    ))}
    <Txt x="10" y="809" $c="#b0b0b0" $s={11}>Weekly Pivots | © CompassFX</Txt>

    {priceLabels.map(([y, t]) => (
      <React.Fragment key={t}>
        <line x1="1871" x2="1875" y1={y + 0.5} y2={y + 0.5} stroke="#000" />
        <Txt x="1877" y={y + 3.500}>{t}</Txt>
      </React.Fragment>
    ))}
    {levels.map((l) => (
      <PriceTag key={l.text} y={l.y} fill={l.tag} text={l.text} />
    ))}
    <PriceTag y={613} fill="#000" text="0.78945" />

    <rect x="4.500" y="74.500" width="1867" height="743" fill="none" stroke="#000" />
  </PanelSvg>
);

const adxScale: [number, string][] = [[827,"63"],[867,"47"],[907,"32"],[948,"16"],[973,"1"]];

const AdxChart = () => (
  <PanelSvg width="1916" height="160" viewBox="0 819 1916 160">
    <GridLines rows={[827, 867, 907, 948]} top={820} bottom={978} />
    <DashedVerticals top={820} bottom={978} />
    <ChartLine pts={adxGreen} color="#4aa84a" />
    <ChartLine pts={adxRed} color="#e01c2c" />
    <ChartLine pts={adxBlack} color="#000" />
    <line x1="5" x2="1871" y1="930.500" y2="930.500" stroke="#a52a2a" strokeWidth="1.300" />
    <Txt x="10" y="832" $s={9.700}>ADX(14) 15.7997 +DI:19.6225 -DI:12.7818</Txt>
    {adxScale.map(([y, t]) => (
      <React.Fragment key={t}>
        <line x1="1871" x2="1875" y1={y + 0.5} y2={y + 0.5} stroke="#000" />
        <Txt x="1877" y={y + 3.500}>{t}</Txt>
      </React.Fragment>
    ))}
    <PriceTag y={930} fill="#a52a2a" text="20.0000" />
    <rect x="4.500" y="819.500" width="1867" height="159" fill="none" stroke="#000" />
  </PanelSvg>
);

const App = () => (
  <Page>
    <GlobalStyle />
    <TitleBar>
      <AppBadge>GO</AppBadge>
      2056574: Go Trader MT4 - [NZDUSD,H4]
      <WinButtons>
        <WinButton>
          <svg width="10" height="10"><rect x="1" y="7" width="8" height="2" fill="#222" /></svg>
        </WinButton>
        <WinButton>
          <svg width="11" height="12"><path d="M1.500 3.500h7v8h-7zM3.500 3.500v-3h7v8h-2" fill="none" stroke="#222" /></svg>
        </WinButton>
        <WinButton $close>
          <svg width="11" height="11"><path d="M1 1l9 9M10 1l-9 9" stroke="#fff" strokeWidth="2" /></svg>
        </WinButton>
      </WinButtons>
    </TitleBar>

    <MenuBar>
      <MenuIcon>
        <svg width="15" height="16">
          <rect x="0.500" y="0.500" width="13" height="14" fill="#fff" stroke="#4a7db0" />
          <path d="M3 6l2-2 2 3 3-3M3 12l2-3 2 2 3-3" stroke="#4a7db0" fill="none" />
        </svg>
      </MenuIcon>
      {["File", "View", "Insert", "Charts", "Tools", "Window", "Help"].map((m) => (
        <span key={m}>{m}</span>
      ))}
      <MdiButtons>
        <MdiButton>
          <svg width="10" height="10"><rect x="2" y="7" width="6" height="2" fill="#6b8296" /></svg>
        </MdiButton>
        <MdiButton>
          <svg width="10" height="10"><path d="M1.500 3.500h5v5h-5zM3.500 3.500v-2h5v5h-2" fill="none" stroke="#6b8296" /></svg>
        </MdiButton>
        <MdiButton>
          <svg width="10" height="10"><path d="M1 1l8 8M9 1l-8 8" stroke="#6b8296" strokeWidth="1.600" /></svg>
        </MdiButton>
      </MdiButtons>
    </MenuBar>

    <Toolbar>
      <Grip $ml={2} $w={9} />
      <Tool $w={22}>{Icons.newChart}</Tool>
      <Caret />
      <Tool $w={22} $ml={7}>{Icons.profiles}</Tool>
      <Caret />
      <Sep $ml={7} />
      <Tool $w={32}>{Icons.market}</Tool>
      <Tool $w={25}>{Icons.nav}</Tool>
      <Tool $w={29}>{Icons.folderStar}</Tool>
      <Tool $w={28}>{Icons.terminal}</Tool>
      <Tool $w={29}>{Icons.tester}</Tool>
      <Sep $ml={2} />
      <Tool $w={26} $ml={4}>{Icons.newOrder}</Tool>
      <ToolLabel $w={66}>New Order</ToolLabel>
      <Tool $w={16}>{Icons.tag}</Tool>
      <Tool $w={22} $ml={8}>{Icons.auto}</Tool>
      <ToolLabel $w={73} $ml={3}>AutoTrading</ToolLabel>
      <Grip $ml={1} />
      <Tool $w={24} $ml={4}>{Icons.bars}</Tool>
      <Tool $w={24} $ml={4} $active>{Icons.candle}</Tool>
      <Tool $w={24} $ml={4}>{Icons.line}</Tool>
      <Sep $ml={5} />
      <Tool $w={24} $ml={3}>{Icons.zoomIn}</Tool>
      <Tool $w={25} $ml={4}>{Icons.zoomOut}</Tool>
      <Tool $w={24} $ml={3}>{Icons.tile}</Tool>
      <Sep $ml={5} />
      <Tool $w={25} $ml={5}>{Icons.scroll}</Tool>
      <Tool $w={23} $ml={4} $active>{Icons.shift}</Tool>
      <Sep $ml={5} />
      <Tool $w={22} $ml={5}>{Icons.addIndicator}</Tool>
      <Caret />
      <Tool $w={22} $ml={6}>{Icons.clock}</Tool>
      <Caret />
      <Tool $w={23} $ml={7}>{Icons.template}</Tool>
      <Caret />
      <Grip $ml={7} />
      <Tool $w={25} $active>{Icons.cursor}</Tool>
      <Tool $w={22} $ml={4}>{Icons.cross}</Tool>
      <Sep $ml={7} />
      <Tool $w={22} $ml={6}>{Icons.vline}</Tool>
      <Tool $w={23} $ml={6}>{Icons.hline}</Tool>
      <Tool $w={22} $ml={6}>{Icons.trend}</Tool>
      <Tool $w={22} $ml={6}>{Icons.channel}</Tool>
      <Tool $w={22} $ml={5}>{Icons.fibo}</Tool>
      <Tool $w={22} $ml={6}>{Icons.textA}</Tool>
      <Tool $w={23} $ml={6}>{Icons.textT}</Tool>
      <Tool $w={21} $ml={6}>{Icons.rect}</Tool>
      <Tool $w={22} $ml={7}>{Icons.ellipse}</Tool>
      <Tool $w={22} $ml={6}>{Icons.arrows}</Tool>
      <Caret />
      <Sep $ml={5} />
      <Grip $ml={1} />
      {timeframes.map((t) => (
        <Tool key={t} $w={28} $active={t === "H4"}>{t}</Tool>
      ))}
      <Sep $ml={1} />
      <SearchBox>
        <svg width="15" height="15" viewBox="0 0 15 15">
          <circle cx="9" cy="6" r="4" fill="#fff" stroke="#3b78b5" strokeWidth="1.600" />
          <line x1="6" y1="9" x2="2" y2="14" stroke="#3b78b5" strokeWidth="2.200" />
        </svg>
      </SearchBox>
      <ChatBadge>
        <svg width="17" height="19" viewBox="0 0 17 19">
          <path d="M1 1h15v13H9l-3 4v-4H1z" fill="#5f7f9f" />
          <text x="5" y="12" fontSize="11" fill="#fff" fontFamily="Liberation Sans">5</text>
        </svg>
      </ChatBadge>
    </Toolbar>

    <ChartBody>
      <MainChart />
      <AdxChart />
      <TimeAxis>
        {timeLabels.map((t, i) => (
          <TimeCell key={i}>{t}</TimeCell>
        ))}
      </TimeAxis>
    </ChartBody>

    <TabBar>
      {tabs.map(([t, w], i) => (
        <Tab key={i} $w={w} $active={i === 17}>{t}</Tab>
      ))}
      <TabArrows>
        <span>◄</span>
        <span style={{ color: "#222" }}>►</span>
      </TabArrows>
    </TabBar>

    <StatusBar>
      <StatusHelp>For Help, press F1</StatusHelp>
      <StatusCell $w={116}>Default</StatusCell>
      {statusCells.map(([t, w]) => (
        <StatusCell key={t} $w={w}>{t}</StatusCell>
      ))}
      <StatusCell $w={30}>
        <svg width="24" height="13" viewBox="0 0 24 13">
          {Array.from({ length: 12 }).map((_, i) => (
            <line key={i} x1={i * 2 + 0.5} x2={i * 2 + 0.5} y1={i > 5 ? 5 : 0} y2="13" stroke={i < 6 ? "#6a9a1e" : "#c8301e"} />
          ))}
        </svg>
      </StatusCell>
      <Memory>3655/6 kb</Memory>
    </StatusBar>

    <Taskbar>
      <TaskSlot $w={27} $ml={12}><WindowsLogo /></TaskSlot>
      <TaskSlot $w={34} $ml={25}>
        <IeRing width="32" height="32" viewBox="0 0 32 32">
          <ellipse cx="16" cy="16" rx="17" ry="7" transform="rotate(-38 16 16)" fill="none" stroke="#efc12e" strokeWidth="1.800" />
        </IeRing>
        <FaInternetExplorer size={29} color="#2aa4e8" />
      </TaskSlot>
      <TaskSlot $w={34} $ml={29}><FolderIcon /></TaskSlot>
      <TaskSlot $w={57} $ml={15} $open><ChromeLogo /></TaskSlot>
      <TaskSlot $w={57} $ml={5} $open><PeopleIcon /></TaskSlot>
      <TaskSlot $w={25} $ml={20}><CalcIcon /></TaskSlot>
      <TaskSlot $w={32} $ml={32}><WallIcon /></TaskSlot>
      <TaskSlot $w={57} $ml={20} $open>
        <GoMark>G<span>O</span></GoMark>
      </TaskSlot>
      <Tray>
        <svg width="30" height="20" viewBox="0 0 30 20">
          <rect x="1" y="1" width="28" height="18" fill="#4f2f40" stroke="#fff" strokeWidth="1.500" />
          <path d="M4 5h22M4 8h22M4 11h22M8 15h14" stroke="#fff" strokeWidth="1.500" strokeDasharray="2 1" />
        </svg>
        <svg width="8" height="6" viewBox="0 0 8 6" style={{ marginLeft: 14 }}>
          <path d="M4 0l4 5H0z" fill="#eee" />
        </svg>
        <svg width="16" height="14" viewBox="0 0 16 14" style={{ marginLeft: 14 }}>
          <rect x="1" y="1" width="14" height="12" fill="#4f2f40" stroke="#fff" strokeWidth="1.500" />
          <path d="M1 6h14v2H1zM7 8h2v5H7z" fill="#fff" />
        </svg>
        <svg width="15" height="18" viewBox="0 0 15 18" style={{ marginLeft: 9 }}>
          <path d="M1 1v6h3v10M3 1v4M5 1v6" stroke="#fff" fill="none" />
          <rect x="8" y="3" width="6" height="14" fill="none" stroke="#fff" />
          <rect x="9.500" y="1" width="3" height="2" fill="#fff" />
        </svg>
        <svg width="15" height="14" viewBox="0 0 15 14" style={{ marginLeft: 8 }}>
          <path d="M1 12h1.500M5 10v3M8 7v6M11 4v9M14 1v12" stroke="#fff" strokeWidth="1.500" />
        </svg>
        <svg width="13" height="16" viewBox="0 0 13 16" style={{ marginLeft: 11 }}>
          <path d="M1 5h3l4-4v14l-4-4H1z" fill="#fff" />
          <path d="M10 5c1 2 1 4 0 6" stroke="#aaa" fill="none" />
        </svg>
        <Lang>ENG</Lang>
        <Clock>
          8:58 AM
          <br />
          9/10/2014
        </Clock>
      </Tray>
    </Taskbar>
  </Page>
);

export default App;
